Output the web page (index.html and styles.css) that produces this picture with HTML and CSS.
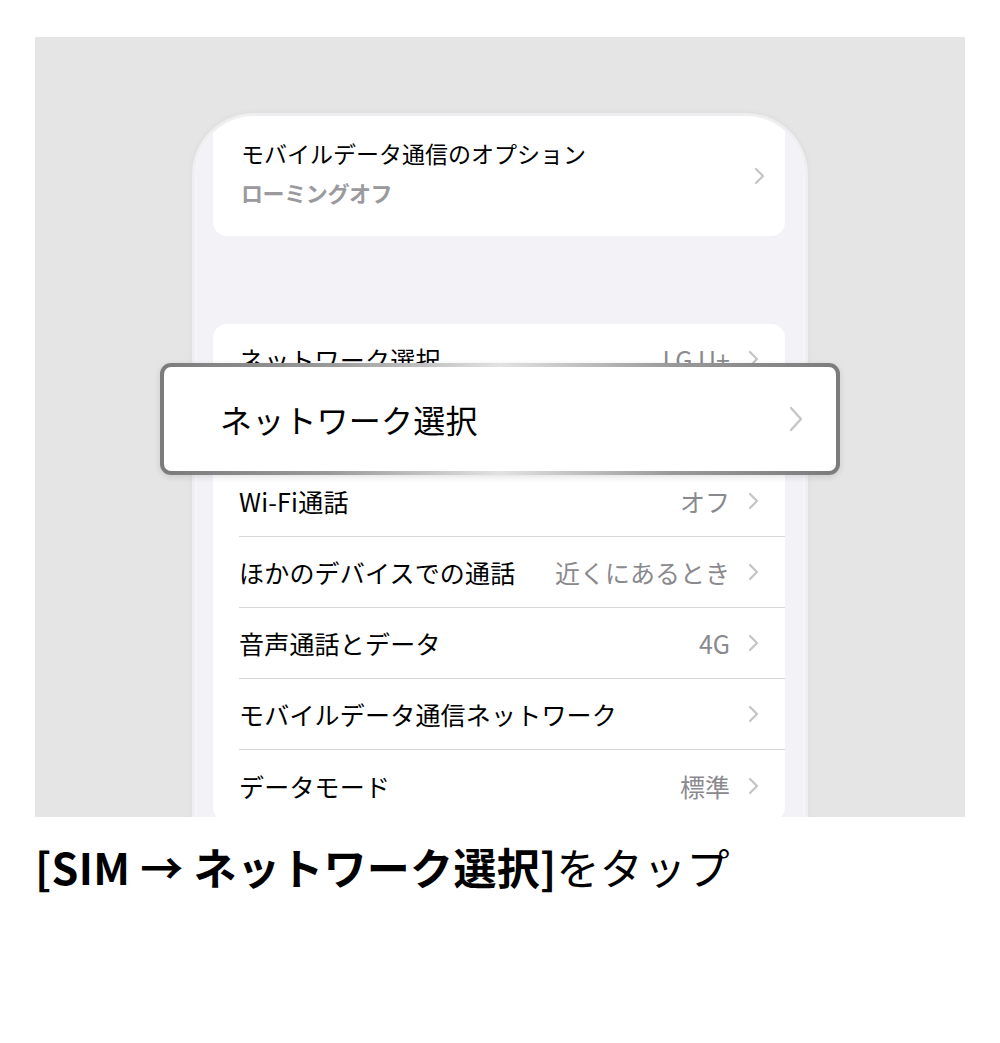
FILE: index.html
```html
<!DOCTYPE html>
<html lang="ja">
  <head>
    <meta charset="utf-8">
    <title>ネットワーク選択</title>
    <link rel="stylesheet" href="styles.css">
  </head>
  <body>
    <!-- Screenshot panel -->
    <div class="stage">
      <div class="phone">
        <div class="screen">
          <div class="card card-top">
            <div class="top-text">
              <div class="top-title">モバイルデータ通信のオプション</div>
              <div class="top-sub">ローミングオフ</div>
            </div>
            <svg class="chev" width="11" height="18" viewBox="0 0 11 18"><path d="M2 2l7 7-7 7" fill="none" stroke="currentColor" stroke-width="2.2" stroke-linecap="round" stroke-linejoin="round"/></svg>
          </div>

          <div class="card card-list">
            <div class="row">
              <span class="label">ネットワーク選択</span>
              <span class="value">LG U+</span>
              <svg class="chev" width="11" height="18" viewBox="0 0 11 18"><path d="M2 2l7 7-7 7" fill="none" stroke="currentColor" stroke-width="2.2" stroke-linecap="round" stroke-linejoin="round"/></svg>
            </div>
            <!-- hidden under the callout -->
            <div class="row"></div>
            <div class="row">
              <span class="label">Wi-Fi通話</span>
              <span class="value">オフ</span>
              <svg class="chev" width="11" height="18" viewBox="0 0 11 18"><path d="M2 2l7 7-7 7" fill="none" stroke="currentColor" stroke-width="2.2" stroke-linecap="round" stroke-linejoin="round"/></svg>
            </div>
            <div class="row">
              <span class="label">ほかのデバイスでの通話</span>
              <span class="value">近くにあるとき</span>
              <svg class="chev" width="11" height="18" viewBox="0 0 11 18"><path d="M2 2l7 7-7 7" fill="none" stroke="currentColor" stroke-width="2.2" stroke-linecap="round" stroke-linejoin="round"/></svg>
            </div>
            <div class="row">
              <span class="label">音声通話とデータ</span>
              <span class="value">4G</span>
              <svg class="chev" width="11" height="18" viewBox="0 0 11 18"><path d="M2 2l7 7-7 7" fill="none" stroke="currentColor" stroke-width="2.2" stroke-linecap="round" stroke-linejoin="round"/></svg>
            </div>
            <div class="row">
              <span class="label">モバイルデータ通信ネットワーク</span>
              <span class="value"></span>
              <svg class="chev" width="11" height="18" viewBox="0 0 11 18"><path d="M2 2l7 7-7 7" fill="none" stroke="currentColor" stroke-width="2.2" stroke-linecap="round" stroke-linejoin="round"/></svg>
            </div>
            <div class="row">
              <span class="label">データモード</span>
              <span class="value">標準</span>
              <svg class="chev" width="11" height="18" viewBox="0 0 11 18"><path d="M2 2l7 7-7 7" fill="none" stroke="currentColor" stroke-width="2.2" stroke-linecap="round" stroke-linejoin="round"/></svg>
            </div>
          </div>
        </div>
      </div>

      <!-- Zoomed highlight over the first row -->
      <div class="highlight">
        <div class="highlight-inner">
          <span class="highlight-label">ネットワーク選択</span>
          <svg class="highlight-chev" width="14" height="26" viewBox="0 0 14 26"><path d="M2 2l10 11-10 11" fill="none" stroke="currentColor" stroke-width="2.4" stroke-linecap="round" stroke-linejoin="round"/></svg>
        </div>
      </div>
    </div>

    <p class="caption"><b>[SIM → ネットワーク選択]</b>をタップ</p>
  </body>
</html>
```

FILE: styles.css
```css
body, html {
  margin: 0;
  padding: 0;
  background: #fff;
  font-family: "Noto Sans CJK JP", "Noto Sans", sans-serif;
  color: #000;
}

.stage {
  position: relative;
  margin: 37px 35px 0;
  height: 780px;
  background-color: #e5e5e5;
  overflow: hidden;
  display: flex;
  justify-content: center;
  padding-top: 76px;
  box-sizing: border-box;
}

/* Phone body */
.phone {
  width: 616px;
  height: 760px;
  border: 3px solid #efeff1;
  border-bottom: none;
  border-radius: 62px 62px 0 0;
  box-sizing: border-box;
  box-shadow: 0 0 6px rgba(0, 0, 0, 0.05);
  background: #f7f7f9;
}

.screen {
  height: 100%;
  margin: 0 1px;
  border-radius: 58px 58px 0 0;
  background-color: #f2f2f7;
  overflow: hidden;
  padding: 0 19px 0 17px;
}

.card {
  background: #fff;
  border-radius: 14px;
}

.chev {
  display: block;
  flex-shrink: 0;
  color: #c4c4c7;
}

.card-top {
  height: 120px;
  box-sizing: border-box;
  padding: 0 20px 0 28px;
  display: flex;
  align-items: center;
  justify-content: space-between;
}

.top-text {
  margin-top: -8px;
}

.top-title {
  font-size: 23px;
  line-height: 30px;
}

.top-sub {
  margin-top: 9px;
  font-size: 22px;
  line-height: 30px;
  font-weight: 700;
  color: #9a9a9e;
  letter-spacing: -0.4px;
}

.card-list {
  margin-top: 88px;
  padding-left: 26px;
}

.row {
  height: 71px;
  display: flex;
  align-items: center;
  padding-right: 26px;
  border-bottom: 1px solid #d6d6da;
  box-sizing: border-box;
  font-size: 25px;
}

.row:last-child {
  border-bottom: none;
}

.label {
  flex: 1;
  white-space: nowrap;
  letter-spacing: 0.2px;
}

.value {
  color: #8a8a8e;
  margin-right: 18px;
}

/* Highlighted row callout */
.highlight {
  position: absolute;
  left: 125px;
  top: 326px;
  width: 680px;
  height: 112px;
  padding: 4px;
  box-sizing: border-box;
  border-radius: 11px;
  background: linear-gradient(90deg, #7b7b7b 0%, #9a9a9a 25%, #e2e2e2 50%, #9a9a9a 75%, #7b7b7b 100%);
  box-shadow: 0 2px 6px rgba(0, 0, 0, 0.12);
}

.highlight-inner {
  height: 100%;
  background: #fff;
  border-radius: 7px;
  display: flex;
  align-items: center;
  justify-content: space-between;
  padding: 0 33px 0 56px;
  box-sizing: border-box;
}

.highlight-label {
  font-size: 32px;
  letter-spacing: 0.2px;
}

.highlight-chev {
  display: block;
  color: #c6c6c6;
}

.caption {
  margin: 22px 0 0 35px;
  font-size: 43px;
  line-height: 54px;
  letter-spacing: 0.3px;
}

.caption b {
  font-weight: 700;
}
```
